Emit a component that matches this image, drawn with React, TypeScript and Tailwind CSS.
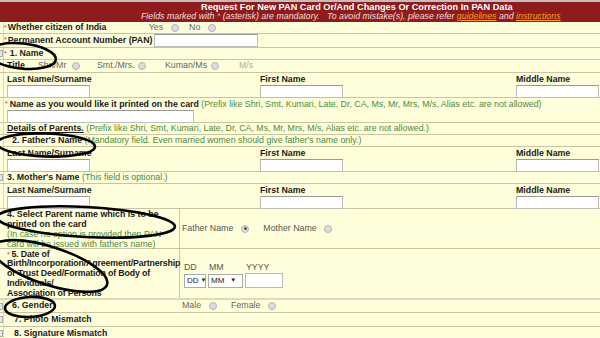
import React from "react";

const GREEN = "text-[#4b8a3c]";

function Radio({ checked = false }: { checked?: boolean }) {
  return (
    <span className="inline-flex w-[8px] h-[8px] rounded-full border border-[#b5b5b5] bg-[#dcdcdc] items-center justify-center align-middle">
      {checked && <span className="w-[3px] h-[3px] rounded-full bg-[#555]" />}
    </span>
  );
}

function Stub({ check }: { check?: boolean }) {
  return (
    <div className="w-[4px] shrink-0 border-r border-[#dcd8b8] flex items-center">
      {check && <span className="w-[3px] h-[7px] bg-[#e6e6e6] border border-l-0 border-[#aaa]" />}
    </div>
  );
}

function Row({
  h,
  check,
  children,
  className = "",
}: {
  h: string;
  check?: boolean;
  children: React.ReactNode;
  className?: string;
}) {
  return (
    <div className={`flex border-b border-[#c9c5a0] ${h} ${className}`}>
      <Stub check={check} />
      <div className="flex-1 flex items-center min-w-0">{children}</div>
    </div>
  );
}

function Star() {
  return <span className="text-[#d33] text-[7px] self-start mt-[1px] mr-[1px]">*</span>;
}

function Input({ w }: { w: string }) {
  return <div className={`${w} h-[13px] bg-white border border-[#bdbdbd] border-t-[#999]`} />;
}

function NameGrid() {
  return (
    <div className="grid grid-cols-[253px_256px_1fr] w-full pl-[3px] h-full pt-[1px]">
      {["Last Name/Surname", "First Name", "Middle Name"].map((l) => (
        <div key={l} className="flex flex-col gap-[1px]">
          <span className="font-bold leading-[10px]">{l}</span>
          <Input w="w-[83px]" />
        </div>
      ))}
    </div>
  );
}

export default function App() {
  return (
    <div className="relative w-[600px] h-[338px] overflow-hidden bg-[#fffedb] text-[#1b1b1b] text-[8.8px] font-['Liberation_Sans',Arial,sans-serif]">
      <div className="h-[22px] bg-[#8e1c1c] border-t-2 border-[#c9bcbc] flex flex-col justify-center leading-[9px]">
        <p className="pl-[201px] font-bold text-white text-[9.2px]">
          Request For New PAN Card Or/And Changes Or Correction In PAN Data
        </p>
        <p className="pl-[141px] italic text-[#f6dcdc]">
          Fields marked with <span className="text-[#e88]">*</span> (asterisk) are mandatory.&nbsp;&nbsp; To avoid
          mistake(s), please refer <span className="text-[#ff9b1f] underline">guidelines</span> and{" "}
          <span className="text-[#ff9b1f] underline">instructions</span>
        </p>
      </div>

      <Row h="h-[12px]">
        <Star />
        <span className="font-bold w-[141px]">Whether citizen of India</span>
        <span className="text-[#666] flex items-center gap-[10px]">
          <span className="flex items-center gap-[8px]">Yes <Radio /></span>
          <span className="flex items-center gap-[8px]">No <Radio /></span>
        </span>
      </Row>

      <Row h="h-[14px]">
        <Star />
        <span className="font-bold mr-[2px]">Permanent Account Number (PAN)</span>
        <Input w="w-[104px]" />
      </Row>

      <Row h="h-[12px]" check>
        <Star />
        <span className="font-bold ml-[2px]">1. Name</span>
      </Row>

      <Row h="h-[13px]">
        <div className="flex items-center pl-[3px] text-[#666]">
          <span className="font-bold text-[#1b1b1b] w-[31px]">Title</span>
          <span className="w-[34px]">Shri/Mr</span>
          <Radio />
          <span className="ml-[17px] w-[41px]">Smt./Mrs.</span>
          <Radio />
          <span className="ml-[19px] w-[46px]">Kuman/Ms</span>
          <Radio />
          <span className="ml-[20px] text-[#aaa]">M/s</span>
        </div>
      </Row>

      <Row h="h-[25px]">
        <NameGrid />
      </Row>

      <Row h="h-[25px]">
        <div className="flex flex-col pl-[1px] h-full pt-[1px] gap-[1px]">
          <span className="leading-[10px] whitespace-nowrap">
            <span className="text-[#d33] text-[7px] align-top">* </span>
            <span className="font-bold">Name as you would like it printed on the card </span>
            <span className={GREEN}>
              (Prefix like Shri, Smt, Kumari, Late, Dr, CA, Ms, Mr, Mrs, M/s, Alias etc. are not allowed)
            </span>
          </span>
          <div className="pl-[2px]">
            <Input w="w-[187px]" />
          </div>
        </div>
      </Row>

      <Row h="h-[12px]">
        <span className="pl-[3px] whitespace-nowrap">
          <span className="font-bold underline">Details of Parents.</span>{" "}
          <span className={GREEN}>
            (Prefix like Shri, Smt, Kumari, Late, Dr, CA, Ms, Mr, Mrs, M/s, Alias etc. are not allowed.)
          </span>
        </span>
      </Row>

      <Row h="h-[12px]">
        <span className="pl-[8px] whitespace-nowrap">
          <span className="font-bold">2. Father's Name</span>{" "}
          <span className={GREEN}>(Mandatory field. Even married women should give father's name only.)</span>
        </span>
      </Row>

      <Row h="h-[25px]">
        <NameGrid />
      </Row>

      <Row h="h-[12px]" check>
        <span className="pl-[3px] whitespace-nowrap">
          <span className="font-bold">3. Mother's Name</span>{" "}
          <span className={GREEN}>(This field is optional.)</span>
        </span>
      </Row>

      <Row h="h-[25px]">
        <NameGrid />
      </Row>

      <div className="flex border-b border-[#c9c5a0] h-[40px]">
        <div className="w-[180px] shrink-0 border-r border-[#c9c5a0] pl-[7px] pt-[1px] flex flex-col justify-center leading-[10px]">
          <span className="font-bold">4. Select Parent name which is to be printed on the card</span>
          <span className={GREEN}>(In case no option is provided then PAN card will be issued with father's name)</span>
        </div>
        <div className="flex items-center pl-[2px] text-[#555]">
          <span className="mr-[8px]">Father Name</span>
          <Radio checked />
          <span className="ml-[14px] mr-[7px]">Mother Name</span>
          <Radio />
        </div>
      </div>

      <div className="flex border-b-2 border-[#ddd9b6] h-[51px]">
        <div className="w-[180px] shrink-0 border-r border-[#c9c5a0] pl-[7px] pt-[1px] flex flex-col justify-center leading-[9.8px] font-bold tracking-[-0.15px]">
          <span>
            <span className="text-[#d33] text-[7px] font-normal align-top">* </span>5. Date of
          </span>
          <span>Birth/Incorporation/Agreement/Partnership or Trust Deed/Formation of Body of Individuals/</span>
          <span>Association of Persons</span>
        </div>
        <div className="flex flex-col justify-center pl-[4px] pt-[4px] text-[#555]">
          <div className="flex leading-[9px]">
            <span className="w-[25px]">DD</span>
            <span className="w-[37px]">MM</span>
            <span>YYYY</span>
          </div>
          <div className="flex items-center gap-[2px] mt-[1px]">
            <div className="w-[22px] h-[14px] bg-white border border-[#aaa] flex items-center pl-[2px] text-[#222] text-[8px]">
              DD <span className="text-[6px] ml-[2px]">▼</span>
            </div>
            <div className="w-[35px] h-[14px] bg-white border border-[#aaa] flex items-center pl-[2px] text-[#222] text-[8px]">
              MM <span className="text-[6px] ml-[6px]">▼</span>
            </div>
            <div className="w-[38px] h-[15px] bg-white border border-[#bbb]" />
          </div>
        </div>
      </div>

      <div className="flex border-b border-[#c9c5a0] h-[13px]">
        <Stub check />
        <span className="w-[176px] shrink-0 pl-[8px] font-bold flex items-center">6. Gender</span>
        <div className="flex items-center pl-[2px] text-[#666]">
          <span className="mr-[8px]">Male</span>
          <Radio />
          <span className="ml-[14px] mr-[8px]">Female</span>
          <Radio />
        </div>
      </div>

      <Row h="h-[14px]" check>
        <span className="pl-[10px] font-bold">7. Photo Mismatch</span>
      </Row>

      <Row h="h-[14px]" check>
        <span className="pl-[10px] font-bold">8. Signature Mismatch</span>
      </Row>

      {/* hand-drawn marker circles over the form */}
      <svg className="absolute inset-0 pointer-events-none" width="600" height="338" viewBox="0 0 600 338">
        <g fill="none" stroke="#000" strokeWidth="2.6">
          <ellipse cx="22" cy="56" rx="34" ry="12.5" transform="rotate(6 22 56)" />
          <ellipse cx="46" cy="145" rx="49" ry="11.5" transform="rotate(2 46 145)" />
          <ellipse cx="86" cy="222" rx="89" ry="15" transform="rotate(3 86 222)" />
          <ellipse cx="50" cy="266" rx="60" ry="19" transform="rotate(18 50 266)" />
          <ellipse cx="30" cy="307" rx="25" ry="10" transform="rotate(-3 30 307)" />
        </g>
      </svg>
    </div>
  );
}
